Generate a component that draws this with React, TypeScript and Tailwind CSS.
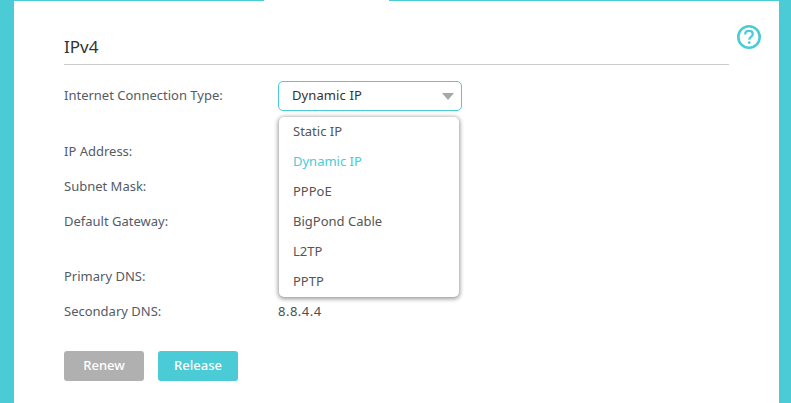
const font = { fontFamily: '"Noto Sans", sans-serif' };

const options = ["Static IP", "Dynamic IP", "PPPoE", "BigPond Cable", "L2TP", "PPTP"];

function Row({ label, value, className }: { label: string; value?: string; className: string }) {
  return (
    <div className={`flex h-[20px] items-center ${className}`}>
      <span className="w-[214px] text-[13px] text-[#555b66]">{label}</span>
      {value && <span className="text-[13px] tracking-[0.5px] text-[#4a4f58]">{value}</span>}
    </div>
  );
}

export default function App() {
  return (
    <div className="h-[403px] w-[791px] overflow-hidden bg-[#4acbd6] pl-[14px]" style={font}>
      <div className="h-[403px] w-[765px]">
        <div className="flex h-[1px]">
          <div className="w-[250px]" />
          <div className="w-[125px] bg-white" />
        </div>
        <div className="relative h-[402px] bg-white px-[50px] pt-[33px]">
          <div className="h-[31px] border-b border-[#cccccc] text-[17px] leading-[26px] text-[#333333]">IPv4</div>

          <div className="relative mt-[16px] flex h-[30px] items-center">
            <span className="w-[214px] text-[13px] text-[#555b66]">Internet Connection Type:</span>
            <div className="flex h-[30px] w-[184px] items-center justify-between rounded-[5px] border border-[#4acbd6] pl-[13px] pr-[7px] text-[13px] tracking-[0.1px] text-[#333333]">
              <span>Dynamic IP</span>
              <span className="h-0 w-0 border-x-[6px] border-t-[7px] border-x-transparent border-t-[#a8a8a8]" />
            </div>
            <div className="absolute left-[215px] top-[36px] z-10 w-[180px] rounded-[5px] bg-white shadow-[0_1px_4px_1px_rgba(0,0,0,0.4)]">
              {options.map((o) => (
                <div
                  key={o}
                  className={`flex h-[30px] items-center pl-[14px] text-[13px] ${o === "Dynamic IP" ? "text-[#4acbd6]" : "text-[#555555]"}`}
                >
                  {o}
                </div>
              ))}
            </div>
          </div>

          <Row label="IP Address:" className="mt-[31px]" />
          <Row label="Subnet Mask:" className="mt-[15px]" />
          <Row label="Default Gateway:" className="mt-[15px]" />
          <Row label="Primary DNS:" className="mt-[35px]" />
          <Row label="Secondary DNS:" value="8.8.4.4" className="mt-[15px]" />

          <div className="mt-[29px] flex gap-[14px]">
            <button className="h-[30px] w-[80px] rounded-[3px] bg-[#b0b0b0] text-[13px] font-medium text-white">Renew</button>
            <button className="h-[30px] w-[80px] rounded-[3px] bg-[#4acbd6] text-[13px] font-medium text-white">Release</button>
          </div>

          <svg className="absolute right-[17px] top-[23px]" width="26" height="26" viewBox="0 0 26 26" fill="none">
            <circle cx="13" cy="13" r="10.7" stroke="#4acbd6" strokeWidth="2.6" />
            <path d="M9.2 10.4c0-2.2 1.7-3.5 3.8-3.5s3.8 1.3 3.8 3.2c0 2.9-3.6 2.7-3.6 5.6" stroke="#4acbd6" strokeWidth="2.2" />
            <circle cx="13.2" cy="18.6" r="1.4" fill="#4acbd6" />
          </svg>
        </div>
      </div>
    </div>
  );
}
